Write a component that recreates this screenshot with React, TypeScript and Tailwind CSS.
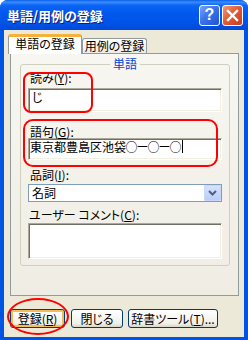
import React from "react";

function Sunken({ className = "", children }: { className?: string; children?: React.ReactNode }) {
  return (
    <div
      className={
        "bg-white border border-t-[#aca899] border-l-[#aca899] border-r-white border-b-white shadow-[inset_1px_1px_0_#716f64,inset_-1px_-1px_0_#f1efe2] " +
        className
      }
    >
      {children}
    </div>
  );
}

function Cell({ ch }: { ch: string }) {
  return <span className="inline-flex w-[11px] justify-center overflow-visible">{ch}</span>;
}

export default function App() {
  return (
    <div className="relative w-[248px] h-[340px] bg-white overflow-hidden font-['Noto_Sans_CJK_JP','Noto_Sans',sans-serif] [font-feature-settings:'palt'] text-[12px] text-black">
      <div className="w-full h-full flex flex-col rounded-t-[8px] overflow-hidden bg-[#0054e3]">
        <div className="h-[30px] flex items-center pl-[7px] pr-[5px] bg-[linear-gradient(180deg,#0a5fe8_0%,#3b8cff_7%,#0b64f5_18%,#0058ee_45%,#0055e8_75%,#0048d8_100%)]">
          <div className="flex-1 text-white font-bold text-[13px] leading-none [text-shadow:1px_1px_0_#0a1f83]">
            単語/用例の登録
          </div>
          <div className="flex gap-[2px]">
            <div className="w-[21px] h-[21px] rounded-[3px] border border-white bg-[linear-gradient(135deg,#7aa3f8_0%,#3c72ea_45%,#1e55d6_100%)] flex items-center justify-center">
              <span className="text-white font-bold text-[16px] leading-none font-['Liberation_Sans',sans-serif]">?</span>
            </div>
            <div className="w-[21px] h-[21px] rounded-[3px] border border-white bg-[linear-gradient(135deg,#f4997a_0%,#e25c36_45%,#c63d1c_100%)] flex items-center justify-center">
              <svg width="13" height="13" viewBox="0 0 13 13">
                <path d="M2 2 L11 11 M11 2 L2 11" stroke="white" strokeWidth="2.4" strokeLinecap="square" />
              </svg>
            </div>
          </div>
        </div>

        <div className="flex-1 mx-[4px] mb-[3px] bg-[#ece9d8] flex flex-col">
          <div className="flex items-end pt-[4px] pl-[4px] h-[23px]">
            <div className="relative z-10 self-start w-[74px] h-[20px] bg-white border-x border-[#919b9c] border-t-[3px] border-t-[#f7b03c] rounded-t-[3px] flex justify-center leading-[12px] pt-[1px]">
              単語の登録
            </div>
            <div className="w-[65px] h-[15px] border border-b-0 border-[#919b9c] rounded-t-[3px] bg-[linear-gradient(180deg,#ffffff,#ecebe6)] flex justify-center leading-[12px] pt-[1px]">
              用例の登録
            </div>
          </div>

          <div className="ml-[6px] w-[229px] h-[243px] border border-[#919b9c] bg-[linear-gradient(180deg,#f7f6f1,#efede3)] flex flex-col">
            <fieldset className="mt-[3px] ml-[9px] w-[210px] border border-[#d0d0bf] rounded-[3px] px-[7px] pb-[6px]">
              <legend className="mx-auto px-[3px] text-[#0046d5] leading-[14px]">単語</legend>
              <div className="leading-[14px] h-[14px] pl-[2px]">
                読み(<span className="underline">Y</span>):
              </div>
              <Sunken className="mt-[3px] h-[24px] pl-[3px] pt-[1px] leading-[14px]">じ</Sunken>
              <div className="mt-[14px] leading-[12px] h-[12px] pl-[2px]">
                語句(<span className="underline">G</span>):
              </div>
              <Sunken className="h-[22px] pl-[1px] pt-[1px] leading-[13px] flex items-start">
                <span>東京都豊島区池袋</span>
                <Cell ch="○" />
                <Cell ch="ー" />
                <Cell ch="○" />
                <Cell ch="ー" />
                <Cell ch="○" />
                <span className="inline-block w-px h-[13px] bg-black ml-[1px]" />
              </Sunken>
              <div className="mt-[9px] leading-[12px] h-[12px] pl-[2px]">
                品詞(<span className="underline">I</span>):
              </div>
              <div className="mt-[3px] h-[18px] border border-[#7f9db9] bg-white flex items-center">
                <span className="flex-1 pl-[3px] leading-[14px]">名詞</span>
                <div className="w-[17px] h-[16px] bg-[linear-gradient(180deg,#d6e2fd,#b9cdfa)] border border-[#c8d6fa] rounded-[1px] flex items-center justify-center">
                  <svg width="9" height="6" viewBox="0 0 9 6">
                    <path d="M1 1 L4.5 4.5 L8 1" stroke="#4d6185" strokeWidth="2" fill="none" />
                  </svg>
                </div>
              </div>
              <div className="mt-[7px] leading-[12px] h-[12px] pl-[1px]">
                ユーザー コメント(<span className="underline">C</span>):
              </div>
              <Sunken className="mt-[2px] h-[36px]" />
            </fieldset>
          </div>

          <div className="flex mt-[13px]">
            <div className="ml-[6px] w-[55px] h-[19px] rounded-[3px] border border-[#003c74] bg-[linear-gradient(180deg,#ffffff,#f0efe8_80%,#d8d5c8)] shadow-[inset_0_0_0_2px_#f5bd5a] flex items-center justify-center leading-[14px]">
              登録(<span className="underline">R</span>)
            </div>
            <div className="ml-[6px] w-[52px] h-[19px] rounded-[3px] border border-[#003c74] bg-[linear-gradient(180deg,#ffffff,#f0efe8_80%,#d8d5c8)] flex items-center justify-center leading-[14px]">
              閉じる
            </div>
            <div className="ml-[5px] w-[90px] h-[19px] rounded-[3px] border border-[#003c74] bg-[linear-gradient(180deg,#ffffff,#f0efe8_80%,#d8d5c8)] flex items-center justify-center leading-[14px]">
              辞書ツール(<span className="underline">T</span>)...
            </div>
          </div>
        </div>
      </div>

      <div className="pointer-events-none absolute left-[23px] top-[72px] w-[70px] h-[41px] border-2 border-[#ff0000] rounded-[8px]" />
      <div className="pointer-events-none absolute left-[23px] top-[119px] w-[195px] h-[48px] border-2 border-[#ff0000] rounded-[10px]" />
      <div className="pointer-events-none absolute left-[7px] top-[298px] w-[62px] h-[37px] border-2 border-[#ff0000] rounded-[50%]" />
    </div>
  );
}
